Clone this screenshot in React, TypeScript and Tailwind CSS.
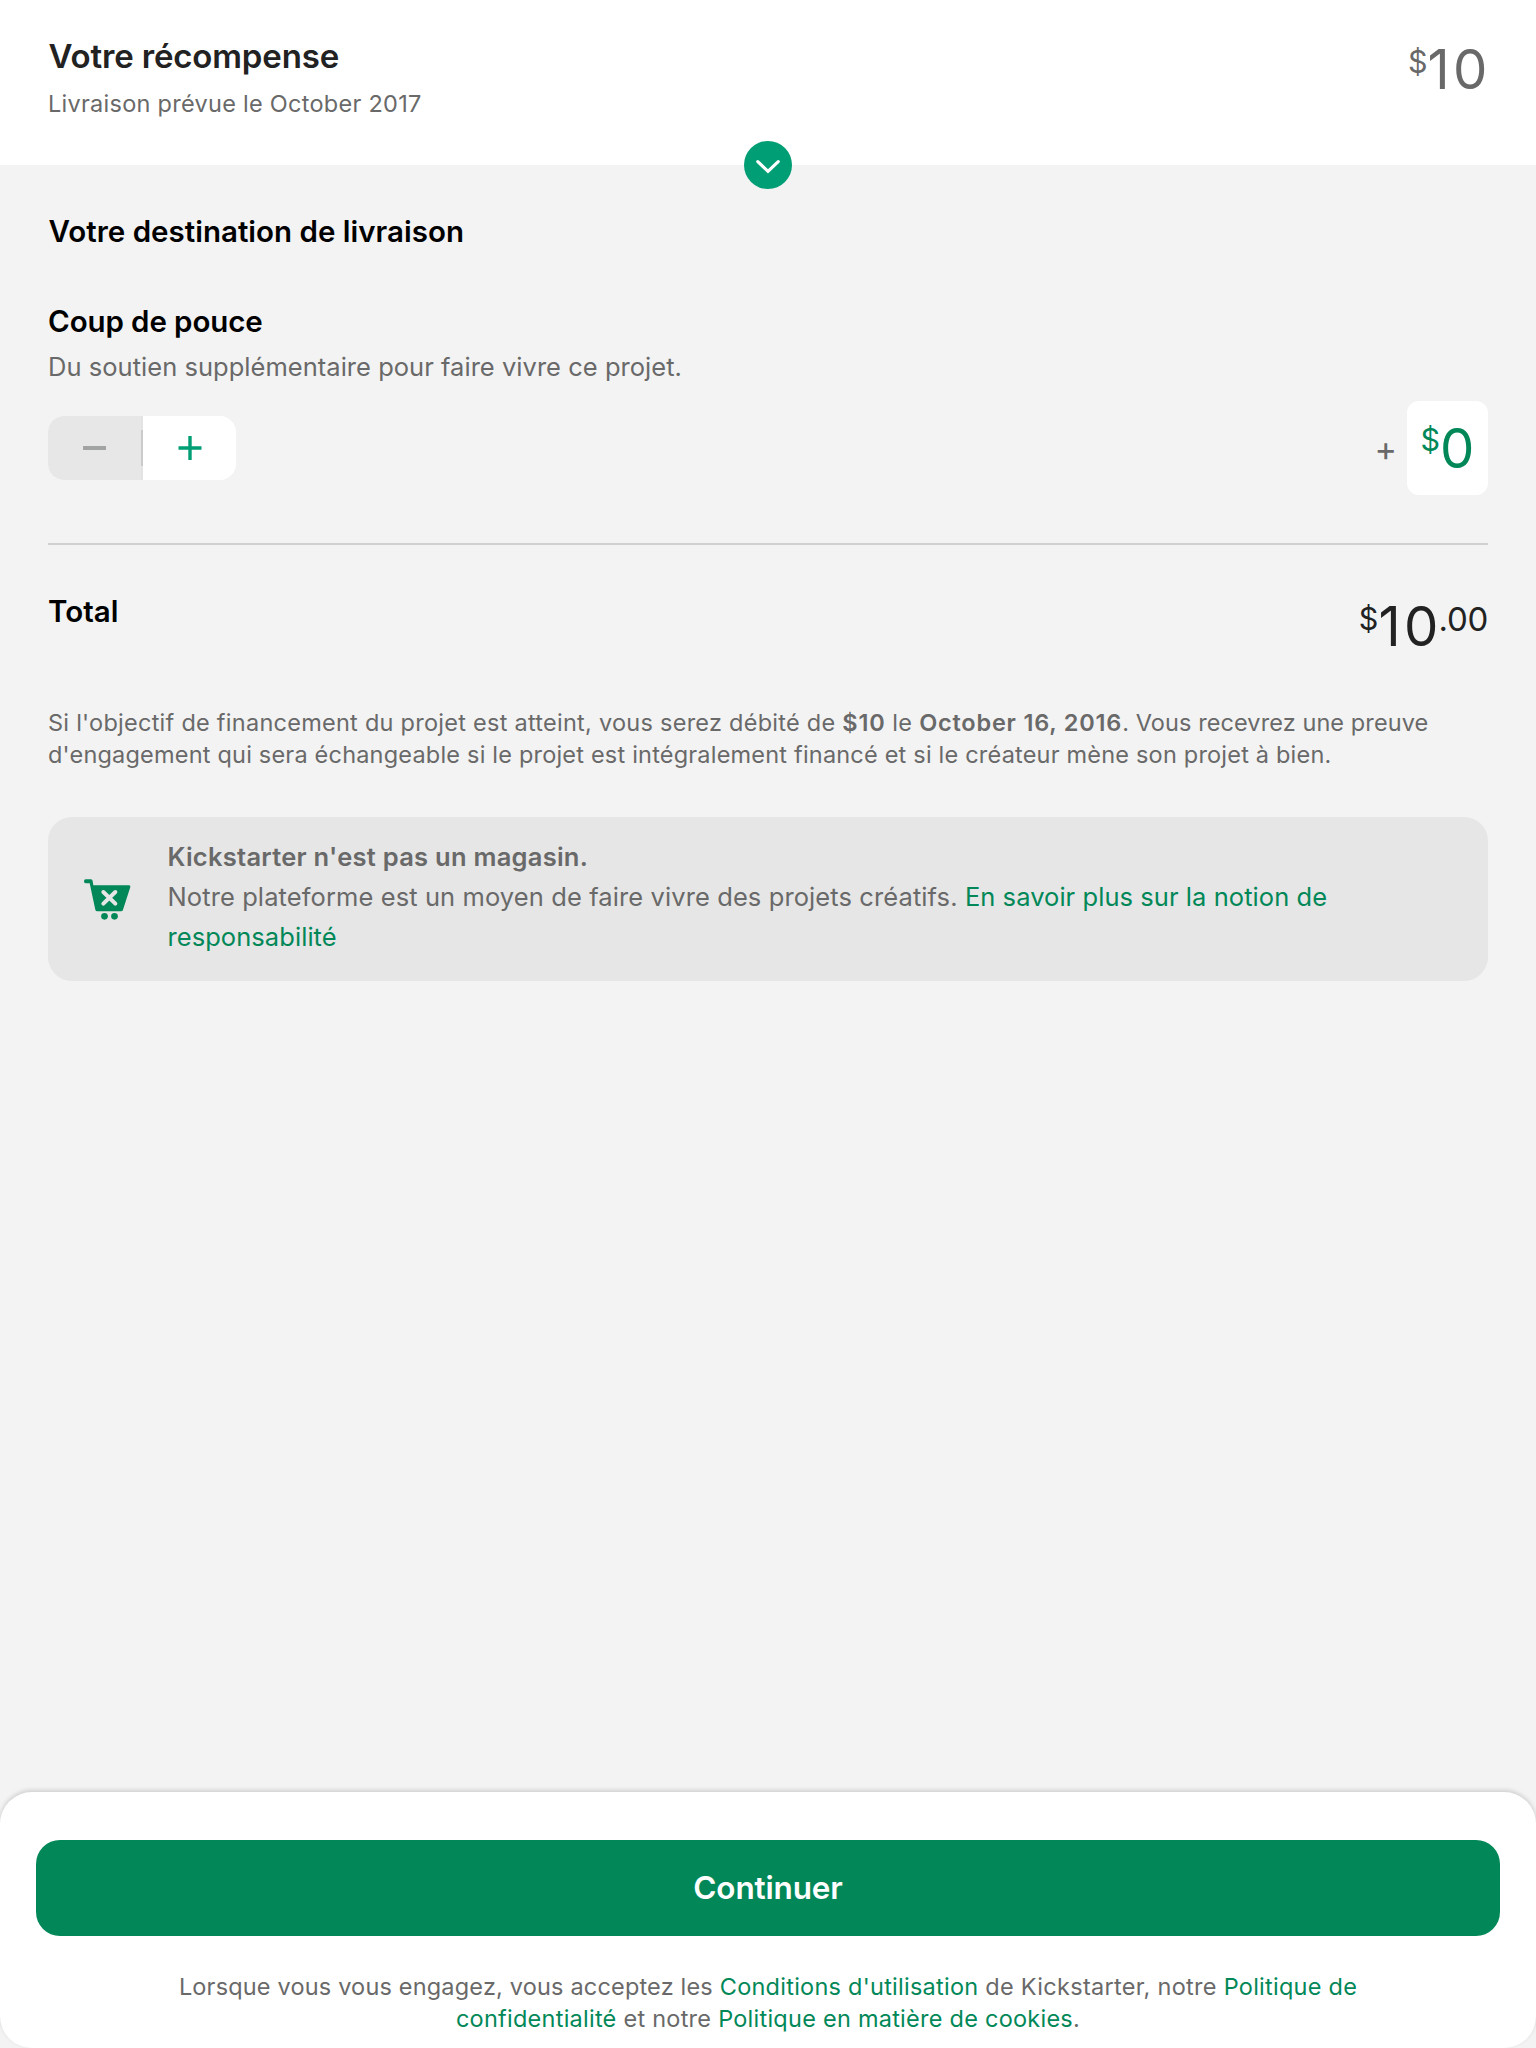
import React from "react";

function Dollar({ className }: { className: string }) {
  return <span className={`block text-[30.5px] leading-8 ${className}`}>$</span>;
}

function Link({ children }: { children: React.ReactNode }) {
  return <a className="text-[#028858]">{children}</a>;
}

function CartIcon() {
  return (
    <svg viewBox="72 86 141 123" className="h-[41px] w-[47px]" fill="#028858">
      <path d="M77 87h16q4 0 5 5l2 13h107q5 0 4 5l-22 68q-1 5-6 5h-71q-5 0-6-5L89 99H77q-5 0-5-6t5-6z" />
      <circle cx="133.500" cy="198" r="10" />
      <circle cx="163.500" cy="198" r="10" />
      <path d="M130 125l36 35M166 125l-36 35" stroke="#e6e6e6" strokeWidth="12" strokeLinecap="round" />
    </svg>
  );
}

export default function App() {
  return (
    <div className="flex h-[2048px] w-[1536px] flex-col bg-[#f3f3f3] font-['Inter',sans-serif] text-[#696969]">
      <header className="relative flex h-[165px] shrink-0 items-start justify-between bg-white px-12 pt-9">
        <div>
          <h1 className="pl-[0.5px] text-[33px] font-semibold leading-10 tracking-[-0.15px] text-[#222222]">
            Votre récompense
          </h1>
          <p className="mt-[12px] text-[23.5px] leading-8 tracking-[0.27px]">Livraison prévue le October 2017</p>
        </div>
        <div className="mt-[5px] -mr-[2.7px] flex items-start">
          <Dollar className="mt-[5px]" />
          <span className="text-[54.5px] leading-[56px] tracking-[3.3px]">10</span>
        </div>
        <button className="absolute -bottom-6 left-[744px] flex size-12 items-center justify-center rounded-full bg-[#009e74]">
          <svg viewBox="0 0 48 48" className="size-12" fill="none" stroke="white" strokeWidth="3.2">
            <path d="M13.800 20.600L24 30.400l10.200-9.800" strokeLinecap="round" />
          </svg>
        </button>
      </header>

      <main className="flex grow flex-col px-12 pt-12">
        <h2 className="pl-[0.5px] text-[29.5px] font-semibold leading-9 tracking-[0.01px] text-black">
          Votre destination de livraison
        </h2>
        <h2 className="mt-[54px] text-[29.5px] font-semibold leading-9 tracking-[-0.1px] text-black">Coup de pouce</h2>
        <p className="mt-3 text-[25.5px] leading-8 tracking-[0.03px]">
          Du soutien supplémentaire pour faire vivre ce projet.
        </p>

        <div className="mt-[18px] flex h-[94px] items-center justify-between">
          <div className="flex h-16 w-[188px] overflow-hidden rounded-2xl bg-white">
            <button className="flex w-[93px] items-center justify-center bg-[#e7e7e7]">
              <span className="h-[4px] w-[23px] bg-[#a2a4a3]" />
            </button>
            <span className="flex w-[2px] items-center bg-[#e3e3e3]">
              <span className="h-9 w-[2px] bg-[#cbcbcb]" />
            </span>
            <button className="flex grow items-center justify-center">
              <svg viewBox="0 0 24 24" className="size-6" stroke="#009e74" strokeWidth="3.400">
                <path d="M12 0v24M0.500 12h23" />
              </svg>
            </button>
          </div>
          <div className="flex items-center">
            <span className="mr-[10px] mt-px text-[34px] leading-8">+</span>
            <div className="flex h-[94px] w-[81px] items-start justify-end rounded-xl bg-white pt-[19px] pr-[13.5px] text-[#028858]">
              <Dollar className="mt-[4px]" />
              <span className="text-[54.5px] leading-[56px]">0</span>
            </div>
          </div>
        </div>

        <div className="mt-12 h-[2px] shrink-0 bg-[#d1d1d1]" />

        <div className="mt-12 flex h-[114px] shrink-0 items-start justify-between">
          <h2 className="text-[29.5px] font-semibold leading-9 text-black">Total</h2>
          <div className="mt-[5px] flex items-start text-[#222222]">
            <Dollar className="mt-[5px]" />
            <span className="text-[54.5px] leading-[56px] tracking-[3.3px]">10</span>
            <span className="mt-[3px] -ml-[3px] text-[33px] leading-9 tracking-[-0.3px]">.00</span>
          </div>
        </div>

        <p className="text-[23.5px] leading-8 tracking-[0.26px]">
          Si l'objectif de financement du projet est atteint, vous serez débité de{" "}
          <b className="font-semibold tracking-[0.8px]">$10</b> le{" "}
          <b className="font-semibold tracking-[0.8px]">October 16, 2016</b>
          <span className="tracking-[0.09px]">. Vous recevrez une preuve</span>
          <br />
          <span className="tracking-[0.2px]">
            d'engagement qui sera échangeable si le projet est intégralement financé et si le créateur mène son projet à
            bien.
          </span>
        </p>

        <section className="mt-[46px] flex h-[164px] shrink-0 items-center rounded-3xl bg-[#e6e6e6] pl-9">
          <CartIcon />
          <div className="-mt-[5px] ml-[36.5px] text-[25.5px] leading-10 tracking-[0.1px]">
            <p className="font-semibold tracking-[0.26px]">Kickstarter n'est pas un magasin.</p>
            <p>
              Notre plateforme est un moyen de faire vivre des projets créatifs.{" "}
              <span className="tracking-[0.06px]">
                <Link>
                  En savoir plus sur la notion de
                  <br />
                  responsabilité
                </Link>
              </span>
            </p>
          </div>
        </section>
      </main>

      <footer className="h-64 shrink-0 rounded-[32px] bg-white px-9 pt-12 shadow-[0_-2px_4px_rgba(0,0,0,0.15)]">
        <button className="block h-24 w-full rounded-3xl bg-[#028858] text-[31.5px] font-semibold tracking-[-0.15px] text-white">
          Continuer
        </button>
        <p className="mt-[35px] text-center text-[23.5px] leading-8 tracking-[0.25px]">
          <span className="tracking-[0.18px]">Lorsque vous vous engagez, vous acceptez les </span>
          <Link>Conditions d'utilisation</Link>
          <span className="tracking-[0.3px]"> de Kickstarter, notre </span>
          <Link>
            Politique de
            <br />
            confidentialité
          </Link>{" "}
          et notre <Link>Politique en matière de cookies</Link>.
        </p>
      </footer>
    </div>
  );
}
